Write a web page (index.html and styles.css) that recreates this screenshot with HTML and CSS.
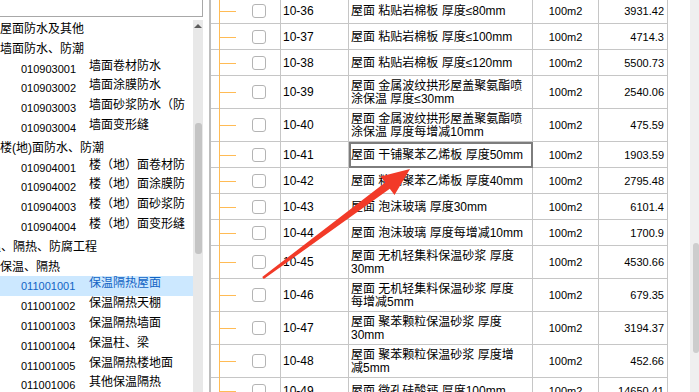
FILE: index.html
```html
<!DOCTYPE html>
<html lang="zh-CN">
<head>
  <meta charset="UTF-8" />
  <title>定额库</title>
  <link rel="stylesheet" href="styles.css">
</head>
<body>
<div class="app">

  <!-- CHAPTER TREE -->
  <aside class="side">
    <div class="search"></div>
    <div class="tree-box">
      <ul class="tree">
        <li class="l1">屋面防水及其他</li>
        <li class="l1">墙面防水、防潮</li>
        <li class="l2"><span class="code">010903001</span><span class="name">墙面卷材防水</span></li>
        <li class="l2"><span class="code">010903002</span><span class="name">墙面涂膜防水</span></li>
        <li class="l2"><span class="code">010903003</span><span class="name">墙面砂浆防水（防</span></li>
        <li class="l2"><span class="code">010903004</span><span class="name">墙面变形缝</span></li>
        <li class="l1">楼(地)面防水、防潮</li>
        <li class="l2"><span class="code">010904001</span><span class="name">楼（地）面卷材防</span></li>
        <li class="l2"><span class="code">010904002</span><span class="name">楼（地）面涂膜防</span></li>
        <li class="l2"><span class="code">010904003</span><span class="name">楼（地）面砂浆防</span></li>
        <li class="l2"><span class="code">010904004</span><span class="name">楼（地）面变形缝</span></li>
        <li class="l0">保温、隔热、防腐工程</li>
        <li class="l1">保温、隔热</li>
        <li class="l2 sel"><span class="code">011001001</span><span class="name">保温隔热屋面</span></li>
        <li class="l2"><span class="code">011001002</span><span class="name">保温隔热天棚</span></li>
        <li class="l2"><span class="code">011001003</span><span class="name">保温隔热墙面</span></li>
        <li class="l2"><span class="code">011001004</span><span class="name">保温柱、梁</span></li>
        <li class="l2"><span class="code">011001005</span><span class="name">保温隔热楼地面</span></li>
        <li class="l2"><span class="code">011001006</span><span class="name">其他保温隔热</span></li>
      </ul>
      <div class="vbar"><i class="up"></i><i class="thumb"></i></div>
    </div>
  </aside>

  <!-- QUOTA GRID -->
  <main class="pane">
    <div class="grid">
      <div class="row"><div class="c tc"><i class="branch"></i><span class="chk"></span></div><div class="c code">10-36</div><div class="c name">屋面 粘贴岩棉板 厚度≤80mm</div><div class="c unit">100m2</div><div class="c price">3931.42</div></div>
      <div class="row"><div class="c tc"><i class="branch"></i><span class="chk"></span></div><div class="c code">10-37</div><div class="c name">屋面 粘贴岩棉板 厚度≤100mm</div><div class="c unit">100m2</div><div class="c price">4714.3</div></div>
      <div class="row"><div class="c tc"><i class="branch"></i><span class="chk"></span></div><div class="c code">10-38</div><div class="c name">屋面 粘贴岩棉板 厚度≤120mm</div><div class="c unit">100m2</div><div class="c price">5500.73</div></div>
      <div class="row tall"><div class="c tc"><i class="branch"></i><span class="chk"></span></div><div class="c code">10-39</div><div class="c name">屋面 金属波纹拱形屋盖聚氨酯喷<br>涂保温 厚度≤30mm</div><div class="c unit">100m2</div><div class="c price">2540.06</div></div>
      <div class="row tall"><div class="c tc"><i class="branch"></i><span class="chk"></span></div><div class="c code">10-40</div><div class="c name">屋面 金属波纹拱形屋盖聚氨酯喷<br>涂保温 厚度每增减10mm</div><div class="c unit">100m2</div><div class="c price">475.59</div></div>
      <div class="row"><div class="c tc"><i class="branch"></i><span class="chk"></span></div><div class="c code">10-41</div><div class="c name focus">屋面 干铺聚苯乙烯板 厚度50mm</div><div class="c unit">100m2</div><div class="c price">1903.59</div></div>
      <div class="row"><div class="c tc"><i class="branch"></i><span class="chk"></span></div><div class="c code">10-42</div><div class="c name">屋面 粘铺聚苯乙烯板 厚度40mm</div><div class="c unit">100m2</div><div class="c price">2795.48</div></div>
      <div class="row"><div class="c tc"><i class="branch"></i><span class="chk"></span></div><div class="c code">10-43</div><div class="c name">屋面 泡沫玻璃 厚度30mm</div><div class="c unit">100m2</div><div class="c price">6101.4</div></div>
      <div class="row"><div class="c tc"><i class="branch"></i><span class="chk"></span></div><div class="c code">10-44</div><div class="c name">屋面 泡沫玻璃 厚度每增减10mm</div><div class="c unit">100m2</div><div class="c price">1700.9</div></div>
      <div class="row tall"><div class="c tc"><i class="branch"></i><span class="chk"></span></div><div class="c code">10-45</div><div class="c name">屋面 无机轻集料保温砂浆 厚度<br>30mm</div><div class="c unit">100m2</div><div class="c price">4530.66</div></div>
      <div class="row tall"><div class="c tc"><i class="branch"></i><span class="chk"></span></div><div class="c code">10-46</div><div class="c name">屋面 无机轻集料保温砂浆 厚度<br>每增减5mm</div><div class="c unit">100m2</div><div class="c price">679.35</div></div>
      <div class="row tall"><div class="c tc"><i class="branch"></i><span class="chk"></span></div><div class="c code">10-47</div><div class="c name">屋面 聚苯颗粒保温砂浆 厚度<br>30mm</div><div class="c unit">100m2</div><div class="c price">3194.37</div></div>
      <div class="row tall"><div class="c tc"><i class="branch"></i><span class="chk"></span></div><div class="c code">10-48</div><div class="c name">屋面 聚苯颗粒保温砂浆 厚度增<br>减5mm</div><div class="c unit">100m2</div><div class="c price">452.66</div></div>
      <div class="row"><div class="c tc"><i class="branch"></i><span class="chk"></span></div><div class="c code">10-49</div><div class="c name">屋面 微孔硅酸钙 厚度100mm</div><div class="c unit">100m2</div><div class="c price">14650.41</div></div>
    </div>
  </main>

  <div class="rbar"><i class="thumb"></i></div>

  <!-- RED ANNOTATION ARROW -->
  <svg class="arrow" width="699" height="392" viewBox="0 0 699 392">
    <polygon fill="#f23a28" points="262.2,277 385.2,182.6 380.5,176.4 410,169 394.5,195 389.8,188.8 263.8,279"/>
  </svg>
</div>
</body>
</html>
```

FILE: styles.css
```css
body {
  margin: 0;
  font-family: "Liberation Sans", "Noto Sans CJK SC", sans-serif;
  font-size: 12px;
  color: #000;
  background: #fff;
}
.app {
  position: relative;
  display: flex;
  width: 699px;
  height: 392px;
  overflow: hidden;
}

/* left tree */
.side {
  width: 203px;
  flex: none;
  display: flex;
  flex-direction: column;
}
.search {
  height: 17px;
  box-sizing: border-box;
  border-right: 1px solid #a8a8a8;
  border-bottom: 1px solid #a8a8a8;
}
.tree-box {
  flex: 1;
  display: flex;
  margin-top: 3px;
  min-height: 0;
}
.tree {
  list-style: none;
  margin: -1px 0 0;
  padding: 0;
  width: 193px;
  overflow: hidden;
}
.tree li {
  height: 19.8px;
  line-height: 20px;
  white-space: nowrap;
}
.tree .l0 { margin-left: -23px; }
.tree .l2 {
  display: flex;
  padding-left: 19px;
}
.l2 .code {
  width: 66px;
  font-size: 11px;
}
.l2 .name {
  width: 96px;
  overflow: hidden;
}
.tree .sel {
  background: #cce8ff;
  color: #1264c4;
}
.vbar {
  width: 10px;
  background: #e8e8e8;
  display: flex;
  flex-direction: column;
  align-items: center;
}
.vbar .up {
  margin-top: 4px;
  width: 0;
  height: 0;
  border-left: 4px solid transparent;
  border-right: 4px solid transparent;
  border-bottom: 4px solid #5c5c5c;
}
.vbar .thumb {
  margin-top: 95px;
  width: 7px;
  height: 131px;
  border-radius: 3px;
  background: #c4c4c4;
}

/* grid */
.pane {
  flex: 1;
  margin-left: 6px;
  border-left: 2px solid #bdbdbd;
}
.grid {
  margin-top: -2px;
  width: 457px;
}
.row {
  display: grid;
  grid-template-columns: 70px 68px 184px 66px 69px;
  height: 26px;
}
.row.tall { height: 33px; }
.c {
  box-sizing: border-box;
  display: flex;
  align-items: center;
  border-right: 1px solid #c6c6c6;
  border-bottom: 1px solid #c6c6c6;
  overflow: hidden;
  white-space: nowrap;
}
/* tree stem + branch in the first column */
.tc {
  padding-left: 8px;
  align-items: stretch;
  overflow: visible;
}
.branch {
  width: 16px;
  border-left: 1px solid #ffbb55;
  margin-bottom: -1px;
  background: linear-gradient(#ffbb55, #ffbb55) 0 50% / 100% 1px no-repeat;
}
.chk {
  align-self: center;
  margin-left: 16px;
  width: 14px;
  height: 14px;
  box-sizing: border-box;
  border: 1px solid #b4b4b4;
  border-radius: 3px;
  background: #fff;
}
.code { padding-left: 2px; }
.name {
  padding: 1px 0 0 2px;
  line-height: 13px;
}
.name.focus {
  outline: 2px solid #7d7d7d;
  outline-offset: -2px;
}
.unit {
  justify-content: center;
  font-size: 11px;
}
.price {
  justify-content: flex-end;
  padding-right: 3px;
  font-size: 11px;
}

/* right scrollbar */
.rbar {
  width: 9px;
  flex: none;
  background: #efefef;
}
.rbar .thumb {
  display: block;
  margin: 243px 0 0 3px;
  width: 6px;
  height: 110px;
  border-radius: 3px;
  background: #cdcdcd;
}

.arrow {
  position: absolute;
  left: 0;
  top: 0;
  pointer-events: none;
}
```
